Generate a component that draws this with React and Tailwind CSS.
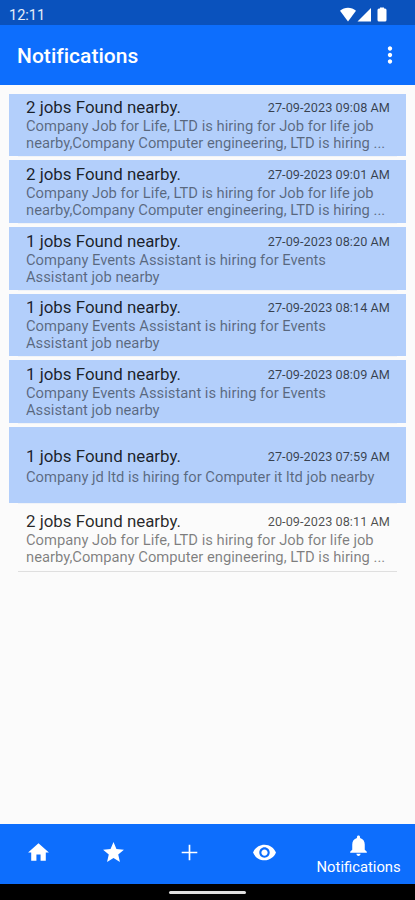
import React from 'react';

const JOB_FOR_LIFE = ['Company Job for Life, LTD is hiring for Job for life job', 'nearby,Company Computer engineering, LTD is hiring ...'];
const EVENTS = ['Company Events Assistant is hiring for Events', 'Assistant job nearby'];

const notifications = [
    { id: 1, title: '2 jobs Found nearby.', date: '27-09-2023 09:08 AM', lines: JOB_FOR_LIFE, unread: true },
    { id: 2, title: '2 jobs Found nearby.', date: '27-09-2023 09:01 AM', lines: JOB_FOR_LIFE, unread: true },
    { id: 3, title: '1 jobs Found nearby.', date: '27-09-2023 08:20 AM', lines: EVENTS, unread: true },
    { id: 4, title: '1 jobs Found nearby.', date: '27-09-2023 08:14 AM', lines: EVENTS, unread: true },
    { id: 5, title: '1 jobs Found nearby.', date: '27-09-2023 08:09 AM', lines: EVENTS, unread: true },
    { id: 6, title: '1 jobs Found nearby.', date: '27-09-2023 07:59 AM', lines: ['Company jd ltd is hiring for Computer it ltd job nearby'], unread: true },
    { id: 7, title: '2 jobs Found nearby.', date: '20-09-2023 08:11 AM', lines: JOB_FOR_LIFE, unread: false },
];

const tabs = [
    { name: 'home', path: 'M10 20v-6h4v6h5v-8h3L12 3 2 12h3v8z' },
    { name: 'star', path: 'M12 17.27 18.18 21l-1.64-7.03L22 9.24l-7.19-.61L12 2 9.19 8.63 2 9.24l5.46 4.73L5.82 21z' },
    { name: 'add', path: 'M19.5 12.8h-6.7v6.700h-1.600v-6.700H4.500v-1.600h6.700V4.500h1.600v6.700h6.700z' },
    { name: 'view', path: 'M12 4.5C7 4.5 2.73 7.61 1 12c1.73 4.39 6 7.5 11 7.5s9.27-3.11 11-7.5c-1.73-4.39-6-7.5-11-7.5zM12 17c-2.76 0-5-2.24-5-5s2.24-5 5-5 5 2.24 5 5-2.24 5-5 5zm0-8c-1.66 0-3 1.34-3 3s1.34 3 3 3 3-1.34 3-3-1.34-3-3-3z' },
    { name: 'bell', label: 'Notifications', path: 'M12 22c1.1 0 2-.9 2-2h-4c0 1.1.89 2 2 2zm6-6v-5c0-3.07-1.64-5.64-4.5-6.32V4c0-.83-.67-1.5-1.5-1.5s-1.5.67-1.5 1.5v.68C7.63 5.36 6 7.92 6 11v5l-2 2v1h16v-1l-2-2z' },
];

function StatusBar() {
    return (
        <div className="h-[25px] shrink-0 bg-[#0a52bd] flex items-start justify-between pl-[9px] pr-7 text-white">
            <span className="text-[14.5px] leading-[31px] text-white/90">12:11</span>
            <div className="flex pt-[7px]">
                <svg width="17" height="15" viewBox="0 0 17 15" fill="currentColor">
                    <path d="M0 3.8C4.5-.3 11.5-.3 16 3.8L8 14.5z" />
                </svg>
                <svg width="15" height="15" viewBox="0 0 15 15" fill="currentColor">
                    <path d="M14 1v13.5H.5z" />
                </svg>
                <svg className="ml-[5px]" width="10" height="15" viewBox="0 0 10 15" fill="currentColor">
                    <path d="M3 .5h4V1.500h1q1.500 0 1.500 1.500v10q0 1.500-1.500 1.500H2q-1.500 0-1.500-1.500V3Q.5 1.500 2 1.500H3z" />
                </svg>
            </div>
        </div>
    );
}

function AppBar() {
    return (
        <header className="h-[60px] shrink-0 bg-[#0d6efd] flex items-center justify-between pl-[17px] pr-3 text-white">
            <h1 className="text-[21px] font-medium leading-6 tracking-[0.03px] pt-0.5">Notifications</h1>
            <svg width="26" height="26" viewBox="0 0 24 24" fill="currentColor">
                <path d="M12 8c1.1 0 2-.9 2-2s-.9-2-2-2-2 .9-2 2 .9 2 2 2zm0 2c-1.1 0-2 .9-2 2s.9 2 2 2 2-.9 2-2-.9-2-2-2zm0 6c-1.1 0-2 .9-2 2s.9 2 2 2 2-.9 2-2-.9-2-2-2z" />
            </svg>
        </header>
    );
}

function NotificationRow({ item }) {
    const single = item.lines.length === 1;

    return (
        <li className="flex flex-col">
            <div
                className={`flex flex-col justify-center pl-[17px] pr-4 ${single ? 'h-[75.9px] pt-[4px]' : 'h-[62.7px] pt-[1px]'} ${
                    item.unread ? 'bg-[#b3cffb]' : ''
                }`}
            >
                <div className={`flex items-start justify-between ${single ? 'h-[22px]' : 'h-[20px]'}`}>
                    <span className="text-[16.9px] leading-[19px] text-black/85">{item.title}</span>
                    <span className="text-[12.7px] leading-[19px] tracking-[0.05px] text-black/70">{item.date}</span>
                </div>
                <div className="text-[14.75px] leading-[17px] text-black/50 whitespace-nowrap">
                    {item.lines.map((line) => (
                        <p key={line}>{line}</p>
                    ))}
                </div>
            </div>
            {/* Separador */}
            <div className={`h-[4px] mx-[9px] flex ${item.unread ? 'items-start' : 'items-center'}`}>
                <div className={`h-px w-full ${item.unread ? 'bg-[#f0f3f8]' : 'bg-[#dfdfdf]'}`} />
            </div>
        </li>
    );
}

function BottomNav() {
    return (
        <nav className="h-[60px] shrink-0 bg-[#0d6efd] flex pl-px text-white">
            {tabs.map((tab) => (
                <button
                    key={tab.name}
                    className={`flex flex-col items-center ${tab.label ? 'w-[113px] pt-[9px]' : 'w-[75.5px] justify-center pb-[3px]'}`}
                >
                    <svg className="shrink-0" width="25" height="25" viewBox="0 0 24 24" fill="currentColor">
                        <path d={tab.path} />
                    </svg>
                    {tab.label && <span className="text-[14.8px] leading-[19px]">{tab.label}</span>}
                </button>
            ))}
        </nav>
    );
}

export default function App() {
    return (
        <div className="w-[415px] h-[900px] flex flex-col overflow-hidden bg-[#fbfbfb] font-['Roboto',sans-serif]">
            <StatusBar />
            <AppBar />
            <ul className="flex-1 px-[9px] pt-[8.5px]">
                {notifications.map((item) => (
                    <NotificationRow key={item.id} item={item} />
                ))}
            </ul>
            <BottomNav />
            <div className="h-4 shrink-0 bg-black flex justify-center items-center">
                <div className="w-[77px] h-[3px] rounded-full bg-[#dedede]" />
            </div>
        </div>
    );
}
